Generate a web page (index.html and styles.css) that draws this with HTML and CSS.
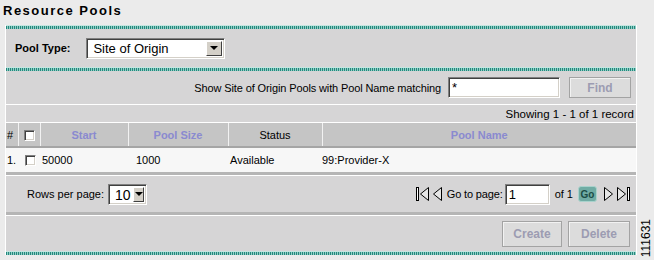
FILE: index.html
```html
<!DOCTYPE html>
<html lang="en">
<head>
    <meta charset="UTF-8">
    <title>Resource Pools</title>
    <link rel="stylesheet" href="styles.css">
</head>
<body>

<div class="page">
    <h1 class="title">Resource Pools</h1>

    <div class="panel">
        <div class="stripe"></div>

        <div class="type-bar">
            <label for="poolType">Pool Type:</label>
            <div class="combo combo-wide">
                <select id="poolType"><option>Site of Origin</option></select>
                <span class="combo-btn"><i></i></span>
            </div>
        </div>

        <div class="stripe"></div>

        <div class="search">
            <span class="search-label">Show Site of Origin Pools with Pool Name matching</span>
            <input type="text" class="field field-search" value="*">
            <button class="btn btn-find">Find</button>
        </div>

        <div class="count">Showing 1 - 1 of 1 record</div>

        <table class="grid">
            <colgroup>
                <col class="col-num">
                <col class="col-check">
                <col class="col-start">
                <col class="col-size">
                <col class="col-status">
                <col>
            </colgroup>
            <thead>
                <tr>
                    <th class="num">#</th>
                    <th><span class="check"></span></th>
                    <th class="sort">Start</th>
                    <th class="sort">Pool Size</th>
                    <th>Status</th>
                    <th class="sort">Pool Name</th>
                </tr>
            </thead>
            <tbody>
                <tr>
                    <td class="num">1.</td>
                    <td class="center"><span class="check"></span></td>
                    <td>50000</td>
                    <td class="size">1000</td>
                    <td>Available</td>
                    <td class="name">99:Provider-X</td>
                </tr>
            </tbody>
        </table>

        <div class="pager">
            <div class="rows">
                <span>Rows per page:</span>
                <div class="combo combo-small">
                    <select><option>10</option></select>
                    <span class="combo-btn"><i></i></span>
                </div>
            </div>
            <div class="nav">
                <svg class="nav-first" width="14" height="16" viewBox="0 0 14 16">
                    <rect x="0.5" y="1.5" width="2" height="13" fill="#fff" stroke="#000"/>
                    <path d="M12.5 1.5 L4.5 8 L12.5 14.5 Z" fill="#e6e6e6" stroke="#000"/>
                </svg>
                <svg class="nav-prev" width="10" height="16" viewBox="0 0 10 16">
                    <path d="M9.5 1.5 L1.5 8 L9.5 14.5 Z" fill="#e6e6e6" stroke="#000"/>
                </svg>
                <span class="goto">Go to page:</span>
                <input type="text" class="field field-page" value="1">
                <span>of 1</span>
                <button class="go">Go</button>
                <svg class="nav-next" width="10" height="16" viewBox="0 0 10 16">
                    <path d="M0.5 1.5 L8.5 8 L0.5 14.5 Z" fill="#e6e6e6" stroke="#000"/>
                </svg>
                <svg class="nav-last" width="14" height="16" viewBox="0 0 14 16">
                    <path d="M0.5 1.5 L8.5 8 L0.5 14.5 Z" fill="#e6e6e6" stroke="#000"/>
                    <rect x="10.5" y="1.5" width="2" height="13" fill="#fff" stroke="#000"/>
                </svg>
            </div>
        </div>

        <div class="actions">
            <button class="btn btn-create">Create</button>
            <button class="btn btn-delete">Delete</button>
        </div>

        <div class="stripe"></div>
    </div>

    <div class="fig-no">111631</div>
</div>

</body>
</html>
```

FILE: styles.css
```css
/* Global Styles */
body {
    margin: 0;
    background-color: #ebebeb;
    font-family: 'Liberation Sans', Arial, sans-serif;
    font-size: 11px;
    color: #000;
}

.page {
    position: relative;
    width: 632px;
    height: 260px;
    padding-left: 5px;
}

.title {
    margin: 0 0 0 -2px;
    padding-top: 3px;
    height: 22px;
    font-size: 13px;
    line-height: 16px;
    letter-spacing: 1.5px;
}

/* Panel */
.panel {
    background-color: #d6d5d6;
    border-left: 1px solid #fff;
    border-right: 1px solid #fff;
}

.stripe {
    height: 3px;
    border-top: 1px solid #c4e6e1;
    background: repeating-linear-gradient(90deg, #23897d 0 1px, #93cdc5 1px 2px);
}

.type-bar {
    height: 38px;
    display: flex;
    align-items: center;
    gap: 16px;
    padding-left: 9px;
}

.type-bar label {
    font-weight: bold;
}

/* Windows style combo box */
.combo {
    display: flex;
    background-color: #fff;
    border-top: 1px solid #808080;
    border-left: 1px solid #808080;
    border-bottom: 1px solid #fff;
    border-right: 1px solid #fff;
    box-shadow: inset 1px 1px 0 #404040, inset -1px -1px 0 #d4d0c8;
    box-sizing: border-box;
}

.combo select {
    flex: 1;
    appearance: none;
    -webkit-appearance: none;
    border: none;
    background: transparent;
    font-family: inherit;
    font-size: 13px;
    padding: 0 0 0 4px;
    margin: 2px 0 2px 2px;
    outline: none;
}

.combo-btn {
    width: 16px;
    margin: 2px;
    background-color: #d4d0c8;
    border-top: 1px solid #fff;
    border-left: 1px solid #fff;
    border-right: 1px solid #404040;
    border-bottom: 1px solid #404040;
    box-sizing: border-box;
    display: flex;
    align-items: center;
    justify-content: center;
}

.combo-btn i {
    width: 0;
    height: 0;
    border-left: 4px solid transparent;
    border-right: 4px solid transparent;
    border-top: 4px solid #000;
}

.combo-wide {
    width: 139px;
    height: 21px;
}

.combo-small {
    width: 39px;
    height: 21px;
}

.combo-small select {
    font-size: 14px;
}

/* Search row */
.search {
    height: 33px;
    display: flex;
    align-items: center;
    justify-content: flex-end;
    padding-right: 5px;
    border-bottom: 1px solid #fff;
}

.search-label {
    letter-spacing: -0.12px;
}

.field {
    height: 21px;
    box-sizing: border-box;
    background-color: #fff;
    border-top: 1px solid #808080;
    border-left: 1px solid #808080;
    border-bottom: 1px solid #fff;
    border-right: 1px solid #fff;
    box-shadow: inset 1px 1px 0 #404040, inset -1px -1px 0 #d4d0c8;
    font-family: inherit;
    font-size: 13px;
    padding: 0 3px;
    outline: none;
}

.field-search {
    width: 112px;
    margin: 0 9px 0 7px;
}

.btn {
    height: 21px;
    background-color: #dcdcdc;
    border: 1px solid #a3a3a3;
    box-shadow: inset 1px 1px 0 #f2f2f2;
    color: #9c9cb2;
    font-family: inherit;
    font-weight: bold;
    font-size: 12px;
    padding: 0;
}

.btn-find {
    width: 62px;
}

.count {
    height: 17px;
    line-height: 19px;
    text-align: right;
    padding-right: 2px;
    font-size: 11.5px;
    border-bottom: 1px solid #fff;
}

/* Results table */
.grid {
    width: 100%;
    table-layout: fixed;
    border-collapse: collapse;
    border-bottom: 3px solid #b5b5b5;
}

.col-num { width: 12px; }
.col-check { width: 22px; }
.col-start { width: 88px; }
.col-size { width: 100px; }
.col-status { width: 94px; }

.grid th {
    height: 23px;
    padding: 0;
    background-color: #c5c5c5;
    border-left: 1px solid #f2f2f2;
    border-bottom: 2px solid #a5a5a5;
    font-weight: normal;
    text-align: center;
}

.grid th:first-child {
    border-left: none;
}

.grid th.sort {
    color: #8a8ad0;
    font-weight: bold;
}

.grid td {
    height: 24px;
    padding: 0 0 0 2px;
    background-color: #f7f7f7;
}

.grid .num {
    text-align: left;
    padding-left: 1px;
}

.grid .center {
    text-align: center;
}

.grid td.size {
    padding-left: 8px;
}

.grid td.name {
    padding-left: 0;
}

.check {
    display: inline-block;
    width: 11px;
    height: 11px;
    vertical-align: middle;
    background-color: #fff;
    border-top: 1px solid #808080;
    border-left: 1px solid #808080;
    border-bottom: 1px solid #fff;
    border-right: 1px solid #fff;
    box-shadow: inset 1px 1px 0 #404040, inset -1px -1px 0 #d4d0c8;
    box-sizing: border-box;
}

/* Pager */
.pager {
    height: 36px;
    display: flex;
    align-items: center;
    justify-content: space-between;
    padding: 0 5px 0 21px;
    border-top: 1px solid #fff;
    border-bottom: 3px solid #b5b5b5;
}

.rows {
    display: flex;
    align-items: center;
    gap: 4px;
}

.nav {
    display: flex;
    align-items: center;
}

.nav-prev {
    margin-left: 2px;
}

.goto {
    margin-left: 5px;
    letter-spacing: -0.15px;
}

.field-page {
    width: 45px;
    margin: 0 5px 0 2px;
}

.go {
    width: 19px;
    height: 16px;
    margin: 0 7px 0 5px;
    padding: 0;
    background-color: #70aca4;
    border: 1px solid #a9d2cc;
    border-radius: 3px;
    color: #1b4c46;
    font-family: inherit;
    font-weight: bold;
    font-size: 10px;
}

.nav-last {
    margin-left: 3px;
}

/* Action buttons */
.actions {
    height: 35px;
    display: flex;
    align-items: center;
    justify-content: flex-end;
    gap: 6px;
    padding-right: 6px;
    border-top: 1px solid #fff;
}

.btn-create {
    width: 60px;
    height: 26px;
}

.btn-delete {
    width: 62px;
    height: 26px;
}

.fig-no {
    position: absolute;
    right: -16px;
    top: 219px;
    writing-mode: vertical-rl;
    transform: rotate(180deg);
    font-size: 12px;
}
```
